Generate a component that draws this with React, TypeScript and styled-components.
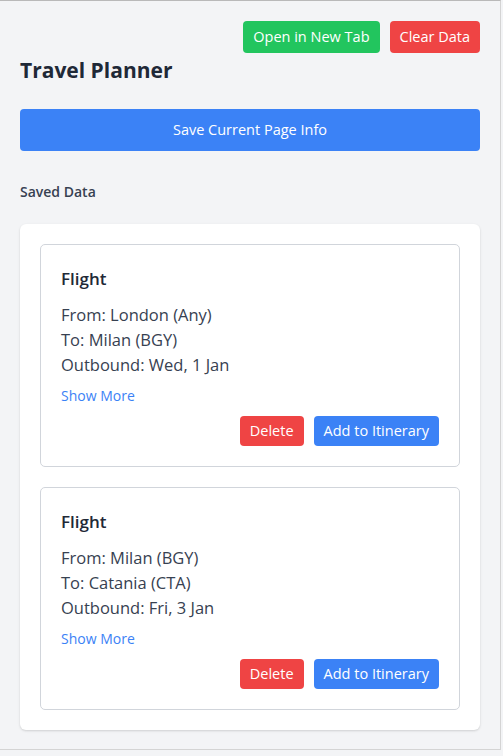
import styled, { createGlobalStyle } from 'styled-components'

const GlobalStyle = createGlobalStyle`
  html, body {
    margin: 0;
    padding: 0;
    background: #f3f4f6;
  }
  body {
    font-family: "Open Sans", "Noto Sans", sans-serif;
    color: #374151;
  }
  * { box-sizing: border-box; }
`

const Frame = styled.div`
  width: 501px;
  height: 750px;
  border-top: 1px solid #b9b9b9;
  border-right: 1px solid #d4d4d4;
  border-bottom: 1px solid #d4d4d4;
  background: #f3f4f6;
  padding: 20px;
  overflow: hidden;
`

const TopBar = styled.div`
  display: flex;
  justify-content: flex-end;
  gap: 10px;
`

const Button = styled.button<{ $tone: 'green' | 'red' | 'blue'; $small?: boolean }>`
  border: none;
  border-radius: 4px;
  font-family: inherit;
  color: #fff;
  font-size: 14.5px;
  line-height: 24px;
  height: ${p => (p.$small ? '30px' : '32px')};
  padding: 0 10px;
  cursor: pointer;
  background: ${p => (p.$tone === 'green' ? '#22c55e' : p.$tone === 'red' ? '#ef4444' : '#3b82f6')};
`

const Title = styled.h1`
  margin: 1px 0 0;
  font-size: 21px;
  line-height: 32px;
  font-weight: 700;
  color: #1f2937;
`

const SaveButton = styled(Button)`
  display: block;
  width: 100%;
  height: 42px;
  margin-top: 23px;
`

const SectionLabel = styled.h2`
  margin: 31px 0 0;
  font-size: 14px;
  line-height: 20px;
  font-weight: 600;
  color: #374151;
`

const Panel = styled.div`
  margin-top: 22px;
  background: #fff;
  border-radius: 6px;
  box-shadow: 0 1px 3px rgba(0, 0, 0, 0.1), 0 1px 2px rgba(0, 0, 0, 0.06);
  padding: 20px;
  display: flex;
  flex-direction: column;
  gap: 20px;
`

const Item = styled.div`
  border: 1px solid #d1d5db;
  border-radius: 5px;
  padding: 20px;
`

const ItemTitle = styled.h3`
  margin: 0;
  font-size: 17px;
  line-height: 27px;
  font-weight: 600;
  color: #1f2937;
`

const Details = styled.div`
  margin-top: 10px;
  font-size: 16.5px;
  line-height: 25px;
  color: #374151;
`

const ShowMore = styled.a`
  display: block;
  margin-top: 8px;
  font-size: 14px;
  line-height: 21px;
  color: #3b82f6;
  cursor: pointer;
`

const Actions = styled.div`
  display: flex;
  justify-content: flex-end;
  gap: 10px;
  margin-top: 10px;
`

const flights = [
  { from: 'London (Any)', to: 'Milan (BGY)', outbound: 'Wed, 1 Jan' },
  { from: 'Milan (BGY)', to: 'Catania (CTA)', outbound: 'Fri, 3 Jan' },
]

export default function App() {
  return (
    <>
      <GlobalStyle />
      <Frame>
        <TopBar>
          <Button $tone="green">Open in New Tab</Button>
          <Button $tone="red">Clear Data</Button>
        </TopBar>
        <Title>Travel Planner</Title>
        <SaveButton $tone="blue">Save Current Page Info</SaveButton>
        <SectionLabel>Saved Data</SectionLabel>
        <Panel>
          {flights.map((f, i) => (
            <Item key={i}>
              <ItemTitle>Flight</ItemTitle>
              <Details>
                <div>From: {f.from}</div>
                <div>To: {f.to}</div>
                <div>Outbound: {f.outbound}</div>
              </Details>
              <ShowMore>Show More</ShowMore>
              <Actions>
                <Button $tone="red" $small>Delete</Button>
                <Button $tone="blue" $small>Add to Itinerary</Button>
              </Actions>
            </Item>
          ))}
        </Panel>
      </Frame>
    </>
  )
}
